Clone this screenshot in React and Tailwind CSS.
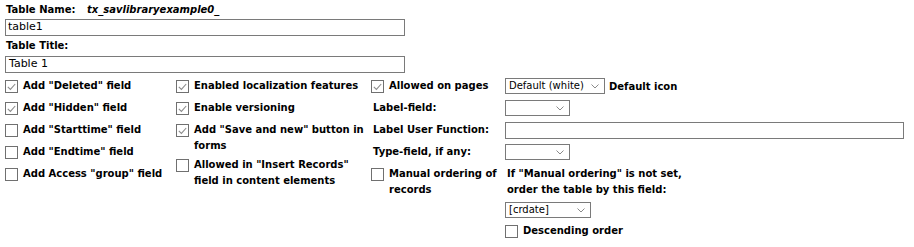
function Box({ checked }) {
  return (
    <span className="mt-[5px] flex h-[13px] w-[13px] shrink-0 items-center justify-center border border-[#707070] bg-white">
      {checked && (
        <svg width="9" height="8" viewBox="0 0 9 8">
          <path d="M0.8 3.8 L3.4 6.4 L8.2 1" fill="none" stroke="#8c8c8c" strokeWidth="1.1" />
        </svg>
      )}
    </span>
  );
}

// checkbox rows: one text line gives a 22px row, extra lines add 16px each
function Check({ checked, children, className = "" }) {
  return (
    <div className={`flex min-h-[22px] items-start gap-[5px] ${className}`}>
      <Box checked={checked} />
      <span className="whitespace-nowrap pt-[3px] text-[10px] font-bold leading-[16px]">{children}</span>
    </div>
  );
}

function Select({ value, width }) {
  return (
    <div
      className={`flex h-[16px] items-center justify-between border border-[#7a7a7a] bg-white pl-[3px] pr-[5px] ${width}`}
    >
      <span className="whitespace-nowrap text-[10px] leading-none">{value}</span>
      <svg width="8" height="5" viewBox="0 0 8 5">
        <path d="M0.5 0.5 L4 4 L7.5 0.5" fill="none" stroke="#8a8a8a" strokeWidth="1" />
      </svg>
    </div>
  );
}

function Label({ children }) {
  return (
    <div className="min-h-[22px] whitespace-nowrap pl-[2px] pt-[3px] text-[10px] font-bold leading-[16px]">
      {children}
    </div>
  );
}

export default function App() {
  return (
    <div className="w-[914px] h-[247px] bg-white px-[5px] pt-[1px] text-[11px] text-black font-['DejaVu_Sans',Verdana,sans-serif]">
      <div className="flex h-[16px] items-center text-[10px] font-bold">
        <span className="w-[82px] pl-[1px]">Table Name:</span>
        <span className="italic">tx_savlibraryexample0_</span>
      </div>
      <div className="mt-[2px] flex h-[17px] w-[400px] items-center border border-[#7a7a7a] px-[2px]">
        table1
      </div>
      <div className="flex h-[19px] items-center pl-[1px] text-[10px] font-bold">Table Title:</div>
      <div className="mt-[1px] flex h-[17px] w-[400px] items-center border border-[#7a7a7a] px-[3px]">
        Table 1
      </div>

      <div className="mt-[2px] flex">
        <div className="flex w-[171px] flex-col">
          <Check checked>Add "Deleted" field</Check>
          <Check checked>Add "Hidden" field</Check>
          <Check>Add "Starttime" field</Check>
          <Check>Add "Endtime" field</Check>
          <Check>Add Access "group" field</Check>
        </div>

        <div className="flex w-[195px] flex-col">
          <Check checked>Enabled localization features</Check>
          <Check checked>Enable versioning</Check>
          <Check checked>
            Add "Save and new" button in
            <br />
            forms
          </Check>
          <Check>
            Allowed in "Insert Records"
            <br />
            field in content elements
          </Check>
        </div>

        <div className="grid grid-cols-[134px_400px]">
          <Check checked>Allowed on pages</Check>
          <div className="flex h-[22px] items-center gap-[4px]">
            <Select value="Default (white)" width="w-[100px]" />
            <span className="text-[10px] font-bold">Default icon</span>
          </div>

          <Label>Label-field:</Label>
          <div className="flex h-[22px] items-center">
            <Select value="" width="w-[65px]" />
          </div>

          <Label>Label User Function:</Label>
          <div className="flex h-[22px] items-center">
            <div className="h-[17px] w-[399px] border border-[#7a7a7a]" />
          </div>

          <Label>Type-field, if any:</Label>
          <div className="flex h-[22px] items-center">
            <Select value="" width="w-[65px]" />
          </div>

          <Check>
            Manual ordering of
            <br />
            records
          </Check>
          <div className="flex flex-col">
            <Label>
              If "Manual ordering" is not set,
              <br />
              order the table by this field:
            </Label>
            <div className="mt-[4px]">
              <Select value="[crdate]" width="w-[86px]" />
            </div>
            <Check className="mt-[2px]">Descending order</Check>
          </div>
        </div>
      </div>
    </div>
  );
}
